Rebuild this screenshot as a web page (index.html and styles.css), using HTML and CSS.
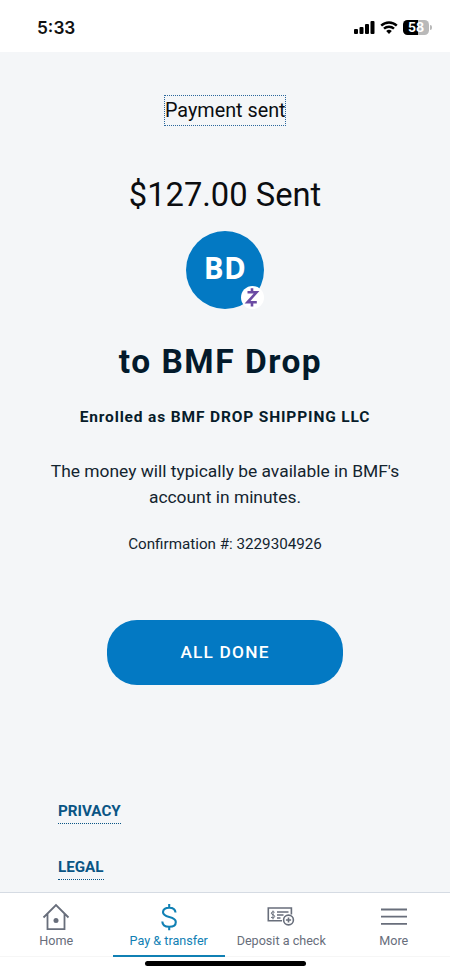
FILE: index.html
```
<!DOCTYPE html>
<html lang="en">
<head>
    <meta charset="UTF-8">
    <meta name="viewport" content="width=device-width, initial-scale=1">
    <title>Payment sent</title>
    <link rel="stylesheet" href="styles.css">
</head>
<body>
<div class="status">
    <span class="time">5:33</span>
    <div class="status-icons">
        <svg class="signal" width="21" height="13" viewBox="0 0 21 13">
            <rect x="0" y="8" width="4" height="5" rx="1"/>
            <rect x="5.5" y="6" width="4" height="7" rx="1"/>
            <rect x="11" y="3" width="4" height="10" rx="1"/>
            <rect x="16.5" y="0" width="4" height="13" rx="1"/>
        </svg>
        <svg class="wifi" width="18" height="13" viewBox="0 0 18 13">
            <path d="M1.2 4.6a11.2 11.2 0 0 1 15.6 0M4 7.7a7.2 7.2 0 0 1 10 0"/>
            <path class="dot" d="M6.2 10.1a4.2 4.2 0 0 1 5.6 0L9 12.9z"/>
        </svg>
        <div class="battery">58</div>
    </div>
</div>

<div class="content">
    <h1 class="title">Payment sent</h1>
    <div class="amount">$127.00 Sent</div>
    <div class="avatar">
        <span>BD</span>
        <svg class="zelle" width="23" height="23" viewBox="0 0 23 23">
            <circle cx="11.5" cy="11.5" r="11.5"/>
            <path d="M6.5 6.3h9L6.5 16.3h9.3M11 2.2v4M11 16.3v4.3"/>
        </svg>
    </div>
    <h2 class="payee">to BMF Drop</h2>
    <div class="enrolled">Enrolled as BMF DROP SHIPPING LLC</div>
    <p class="note">The money will typically be available in BMF's account in minutes.</p>
    <p class="confirm">Confirmation #: 3229304926</p>
    <button class="done">ALL DONE</button>
    <div class="links">
        <a class="link">PRIVACY</a>
        <a class="link">LEGAL</a>
    </div>
</div>

<div class="nav">
    <div class="tab">
        <svg width="28" height="28" viewBox="0 0 28 28">
            <path d="M1.500 14.500L14 2l12.500 12.500M5.500 11v15.200h17V11"/>
            <circle class="fill" cx="14" cy="17.500" r="2.500"/>
        </svg>
        <span>Home</span>
    </div>
    <div class="tab active">
        <svg width="28" height="28" viewBox="0 0 28 28">
            <path d="M20.500 9.500C20.300 6.200 18 4.700 14.200 4.700c-3.800 0-6.200 1.700-6.200 4.600 0 6.300 12.800 2.900 12.800 9.600 0 3-2.500 4.900-6.600 4.900-4.300 0-6.800-1.900-6.900-5.300M14.200 1v3.700M14.200 23.800v3.400"/>
        </svg>
        <span>Pay &amp; transfer</span>
    </div>
    <div class="tab">
        <svg class="check" width="28" height="28" viewBox="0 0 28 28">
            <path d="M15 17.800H1.300V5H24.400v6.500"/>
            <path d="M10 9h11.500M10 12h6.500M10 15h3.500"/>
            <path class="thin" d="M7.600 9.300C6.600 8.500 4.300 8.700 4.300 10.200c0 1.900 3.400 1.200 3.400 3.200 0 1.600-2.600 1.800-3.700.8M6 7.600v8.700"/>
            <circle cx="21.500" cy="17" r="4.900"/>
            <path d="M18.900 17h5.200M21.500 14.400v5.200"/>
        </svg>
        <span>Deposit a check</span>
    </div>
    <div class="tab">
        <svg width="28" height="28" viewBox="0 0 28 28">
            <path d="M1 6.500h26M1 13.700h26M1 20.900h26"/>
        </svg>
        <span>More</span>
    </div>
</div>
<div class="bottom"><div class="home-bar"></div></div>
</body>
</html>
```
FILE: styles.css
```
* {
    box-sizing: border-box;
}
body {
    margin: 0;
    height: 975px;
    display: flex;
    flex-direction: column;
    font-family: Roboto, "Liberation Sans", sans-serif;
    color: #101820;
    background-color: #ffffff;
    overflow: hidden;
}

/* status bar */
.status {
    height: 52px;
    flex: none;
    display: flex;
    justify-content: space-between;
    align-items: center;
    padding: 2px 21px 0 37px;
}
.time {
    padding-top: 1px;
    font: 600 17.3px/20px Inter, sans-serif;
    color: #111111;
}
.status-icons {
    display: flex;
    align-items: center;
    gap: 5px;
}
.wifi path {
    fill: none;
    stroke: #000000;
    stroke-width: 2.4;
}
.wifi .dot {
    fill: #000000;
    stroke: none;
}
.battery {
    position: relative;
    width: 26px;
    height: 15px;
    border-radius: 4.5px;
    background: linear-gradient(90deg, #000000 58%, #b9b9b9 58%);
    color: #ffffff;
    font: 700 12.5px/15px Inter, sans-serif;
    text-align: center;
}
.battery::after {
    content: "";
    position: absolute;
    right: -3px;
    top: 5px;
    width: 2px;
    height: 5px;
    border-radius: 0 2px 2px 0;
    background-color: #b9b9b9;
}

/* confirmation */
.content {
    flex: 1;
    min-height: 0;
    display: flex;
    flex-direction: column;
    align-items: center;
    padding-top: 43px;
    background-color: #f4f6f8;
    text-align: center;
}
.title {
    margin: 0;
    width: 122px;
    height: 31px;
    border: 1px dotted #2a679c;
    font-size: 19.8px;
    font-weight: 400;
    line-height: 29px;
    white-space: nowrap;
    color: #0b0d10;
}
.amount {
    margin-top: 49px;
    font-size: 32.7px;
    line-height: 40px;
    color: #0b0d10;
}
.avatar {
    position: relative;
    width: 78px;
    height: 78px;
    margin-top: 16px;
    border-radius: 50%;
    background-color: #0379c3;
    color: #ffffff;
    font: 700 29.5px/74px "Open Sans", sans-serif;
    letter-spacing: 0.5px;
}
.zelle {
    position: absolute;
    right: 0;
    bottom: 0;
    fill: #ffffff;
}
.zelle path {
    fill: none;
    stroke: #6b4ba3;
    stroke-width: 2.6;
}
.payee {
    margin: 33px 0 0;
    padding-right: 9px;
    font-size: 33.5px;
    line-height: 40px;
    letter-spacing: 1.5px;
    color: #031a2b;
}
.enrolled {
    margin-top: 25px;
    font-size: 15.5px;
    font-weight: 700;
    line-height: 20px;
    letter-spacing: 0.85px;
    color: #071c2a;
}
.note {
    width: 370px;
    margin: 31px 0 0;
    font-size: 17.4px;
    line-height: 26px;
    color: #13242f;
}
.confirm {
    margin: 24px 0 0;
    font-size: 15.2px;
    line-height: 20px;
    color: #13242f;
}
.done {
    width: 236px;
    height: 65px;
    flex: none;
    margin-top: 66px;
    padding: 0 0 1px;
    border: none;
    border-radius: 30px;
    background-color: #0379c3;
    color: #ffffff;
    font: 500 17.3px/20px Roboto, sans-serif;
    letter-spacing: 1.2px;
}
.links {
    align-self: stretch;
    display: flex;
    flex-direction: column;
    align-items: flex-start;
    gap: 31px;
    margin-top: 114px;
    padding-left: 58px;
}
.link {
    border-bottom: 1px dotted #0a5585;
    font-size: 15.2px;
    font-weight: 700;
    line-height: 24px;
    color: #0a5585;
}

/* tab bar */
.nav {
    height: 65px;
    flex: none;
    display: flex;
    border-top: 1px solid #d5dbe3;
}
.tab {
    flex: 1;
    display: flex;
    flex-direction: column;
    align-items: center;
    padding-top: 10px;
    border-bottom: 1px solid #f6f6f6;
    color: #686e7b;
    font-size: 12.6px;
    line-height: 20px;
    white-space: nowrap;
}
.tab svg {
    flex: none;
    fill: none;
    stroke: #686e7b;
    stroke-width: 1.8;
}
.tab .fill {
    fill: #686e7b;
    stroke: none;
}
.tab .thin {
    stroke-width: 1;
}
.tab .check {
    stroke-width: 1.6;
}
.tab.active {
    border-bottom: 2px solid #1080b4;
    color: #1080b4;
}
.tab.active svg {
    stroke: #1080b4;
    stroke-width: 2.1;
}
.bottom {
    height: 18px;
    flex: none;
    padding-top: 4px;
}
.home-bar {
    width: 161px;
    height: 5px;
    margin: 0 auto;
    border-radius: 3px;
    background-color: #000000;
}
```
